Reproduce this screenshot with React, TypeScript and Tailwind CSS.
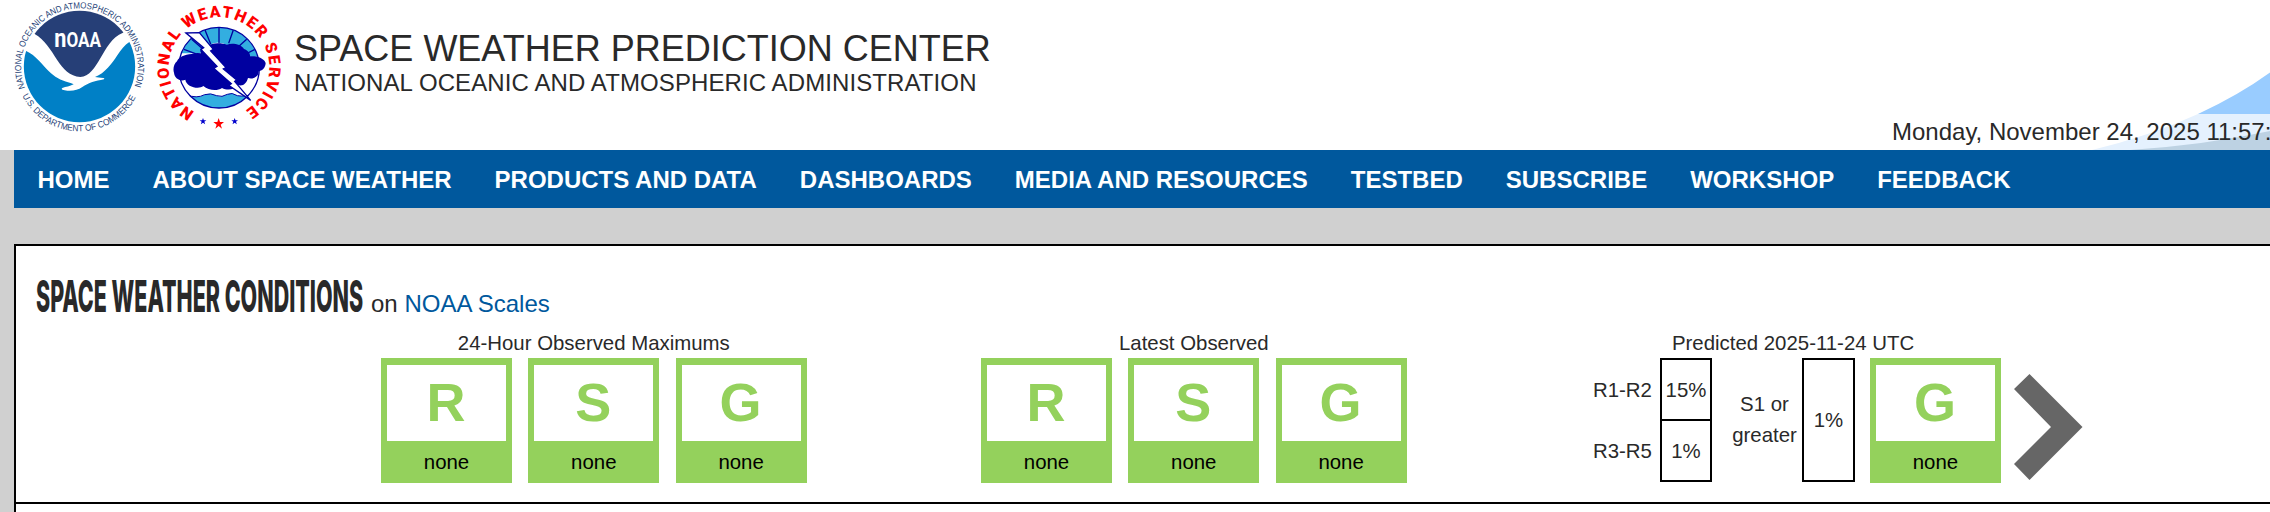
import React from 'react'

const navItems = [
  'HOME',
  'ABOUT SPACE WEATHER',
  'PRODUCTS AND DATA',
  'DASHBOARDS',
  'MEDIA AND RESOURCES',
  'TESTBED',
  'SUBSCRIBE',
  'WORKSHOP',
  'FEEDBACK',
]

function NoaaLogo() {
  return (
    <svg className="block h-[134px] w-[134px]" viewBox="36 0 402 402">
      <defs>
        <path id="noaa-top" d="M75.500 264 A175 175 0 1 1 401.500 264" />
        <path id="noaa-bottom" d="M67 287 A191 191 0 0 0 410 287" />
        <clipPath id="noaa-disc">
          <circle cx="238.500" cy="199.500" r="167" />
        </clipPath>
      </defs>
      <g clipPath="url(#noaa-disc)">
        <path fill="#263f77" d="M60 20H420V60L369 98C335 112 318 146 301 175C285 203 267 231 241 231C209 229 190 208 172 181C151 148 134 119 104 102L60 70Z" />
        <path fill="#0080c6" d="M60 145L77 152C108 165 130 198 153 220C170 235 190 244 214 250L221 253C209 260 198 260 187 264Q181 269 194 271C215 275 232 271 247 261C266 248 286 243 312 238Q316 233 302 233L285 231C315 219 336 190 351 167C363 149 374 135 388 126L430 110V390H50Z" />
      </g>
      <text x="163" y="141" textLength="140" lengthAdjust="spacingAndGlyphs" className="fill-white font-['Roboto'] text-[60px] font-bold">
        <tspan className="text-[76px]">n</tspan>OAA
      </text>
      <text className="fill-[#263f77] font-['Liberation_Sans'] text-[27px]">
        <textPath href="#noaa-top" textLength="674" lengthAdjust="spacingAndGlyphs">
          NATIONAL OCEANIC AND ATMOSPHERIC ADMINISTRATION
        </textPath>
      </text>
      <text className="fill-[#263f77] font-['Liberation_Sans'] text-[27px]">
        <textPath href="#noaa-bottom" textLength="420" lengthAdjust="spacingAndGlyphs">
          U.S. DEPARTMENT OF COMMERCE
        </textPath>
      </text>
    </svg>
  )
}

function NwsLogo() {
  return (
    <svg className="block h-[134px] w-[128px]" viewBox="465 0 384 402">
      <defs>
        <path id="nws-ring" d="M584 335 A151 151 0 1 1 730 335" />
        <clipPath id="nws-disc">
          <circle cx="657" cy="203" r="121" />
        </clipPath>
      </defs>
      <circle cx="657" cy="203" r="121" fill="#fff" />
      <g clipPath="url(#nws-disc)">
        <path fill="#33aee0" d="M530 70H790V170H720Q657 90 600 160H530Z" />
        <path fill="#33aee0" stroke="#0000a0" strokeWidth="3" d="M560 284Q590 297 614 284Q632 278 650 287Q666 293 682 283Q696 276 712 287Q735 291 765 281V330H560Z" />
        <path stroke="#0000a0" strokeWidth="4" d="M657 80V130M615 90L632 132M700 90L686 130M575 118L612 150M740 118L710 145M552 148L600 166M765 148L725 168" />
      </g>
      <circle cx="657" cy="203" r="121" fill="none" stroke="#0000a0" strokeWidth="4" />
      <path
        fill="#0000a0"
        d="M531 184C536 171 553 164 575 162Q591 157 603 160C596 145 608 137 622 138C636 127 665 128 681 134C697 128 724 133 732 147C744 151 751 161 750 169C773 166 795 177 797 190C796 205 785 213 776 214C778 227 763 239 744 234C740 250 729 260 714 255C701 272 680 271 666 264C649 275 625 270 610 258C596 270 558 260 556 239C540 247 523 233 522 218C518 207 522 191 531 184Z"
      />
      <path fill="#fff" stroke="#0000a0" strokeWidth="4" d="M558 99L598 98L640 148L632 153L678 203L670 207L710 240L704 244L752 301L686 256L694 251L641 205L651 199L603 148L611 143Z" />
      <text className="fill-[#f00] font-['Roboto'] text-[48px] font-black">
        <textPath href="#nws-ring" textLength="788" lengthAdjust="spacing">
          NATIONAL WEATHER SERVICE
        </textPath>
      </text>
      <path fill="#f00" d="M656 354L660 366H672L662 374L666 386L656 378L646 386L650 374L640 366H652Z" />
      <path fill="#00c" d="M609 354L611.500 361H619L613 365L615.500 373L609 368L602.500 373L605 365L599 361H606.500Z" />
      <path fill="#00c" d="M704 354L706.500 361H714L708 365L710.500 373L704 368L697.500 373L700 365L694 361H701.500Z" />
    </svg>
  )
}

function ScaleBox({ letter }: { letter: string }) {
  return (
    <div className="flex h-[125px] w-[131px] flex-col bg-[#94d15c] px-1.5 pt-[7px] text-center">
      <div className="h-[76px] bg-white pr-px text-[54px] leading-[74px] font-bold text-[#94d15c]">{letter}</div>
      <div className="text-[20.4px] leading-[42px] text-black">none</div>
    </div>
  )
}

function Observed({ title }: { title: string }) {
  return (
    <div className="w-[425.6px]">
      <h3 className="mb-[3px] text-center text-[20.4px] leading-6">{title}</h3>
      <div className="flex justify-between">
        <ScaleBox letter="R" />
        <ScaleBox letter="S" />
        <ScaleBox letter="G" />
      </div>
    </div>
  )
}

function Predicted() {
  return (
    <div className="w-[410px]">
      <h3 className="mb-[3px] pl-[79px] text-[20.4px] leading-6">Predicted 2025-11-24 UTC</h3>
      <div className="flex text-[20.4px]">
        <div className="w-[67px] pt-[1.5px] leading-[61px]">
          <div>R1-R2</div>
          <div>R3-R5</div>
        </div>
        <div className="h-[124px] w-[52px] border-2 border-black text-center leading-[60px]">
          <div className="h-[61px] border-b-2 border-black">15%</div>
          <div>1%</div>
        </div>
        <div className="flex h-[124px] w-[90px] flex-col justify-center pl-[15px] text-center leading-[31px]">
          <div>S1 or</div>
          <div>greater</div>
        </div>
        <div className="mr-[15px] h-[124px] w-[53px] border-2 border-black text-center leading-[120px]">1%</div>
        <ScaleBox letter="G" />
      </div>
    </div>
  )
}

export default function App() {
  return (
    <div className="flex h-[512px] w-[2270px] flex-col overflow-hidden bg-[#d0d0d0] font-['Liberation_Sans',Arial,sans-serif] text-[#292929]">
      <header className="relative flex h-[150px] bg-white pl-3">
        <NoaaLogo />
        <div className="ml-[9px]">
          <NwsLogo />
        </div>
        <div className="relative ml-[11px] pt-[27px] whitespace-nowrap">
          <h1 className="text-[36px] leading-[43px]">SPACE WEATHER PREDICTION CENTER</h1>
          <h2 className="text-[24px] leading-[25px] tracking-[0.1px]">NATIONAL OCEANIC AND ATMOSPHERIC ADMINISTRATION</h2>
        </div>
        {/* earth limb behind the clock */}
        <svg className="absolute right-0 bottom-0 h-[90px] w-[190px]" viewBox="2080 60 190 90">
          <path fill="#99ccff" d="M2198 114Q2239 95 2270 72.500V114Z" />
          <path fill="#e5f1fe" d="M2092 150Q2150 136 2198 114H2270V150Z" />
          <path fill="#bdd2e3" d="M2130 150Q2205 145 2270 131V150Z" />
        </svg>
        <div className="relative ml-auto w-[378px] overflow-hidden pt-[117px] text-[24px] leading-[29px] whitespace-nowrap">
          Monday, November 24, 2025 11:57:
        </div>
      </header>

      <nav className="ml-3.5 flex h-[58px] shrink-0 gap-[43px] bg-[#00589d] pl-[23.5px] text-[24px] leading-[59px] font-bold whitespace-nowrap text-white">
        {navItems.map((item) => (
          <a key={item}>{item}</a>
        ))}
      </nav>

      <main className="mt-9 ml-3.5 flex-1 border-t-2 border-l-2 border-black bg-white">
        <section className="h-[258px] border-b-2 border-black">
          <div className="flex h-[85px] items-baseline pt-5 pl-5 text-[24px] leading-[60px]">
            <div className="w-[335px]">
              <h2 className="w-max origin-left scale-x-[0.488] font-['Inter'] text-[44px] font-extrabold whitespace-nowrap">
                SPACE WEATHER CONDITIONS
              </h2>
            </div>
            <span className="whitespace-nowrap">
              on <a className="text-[#00589d]">NOAA Scales</a>
            </span>
          </div>
          <div className="flex pl-[365px]">
            <Observed title="24-Hour Observed Maximums" />
            <div className="ml-[174.4px]">
              <Observed title="Latest Observed" />
            </div>
            <div className="ml-[186.4px]">
              <Predicted />
            </div>
            <svg className="mt-[42px] ml-[11px] h-[108px] w-[69px]" viewBox="0 0 69 108">
              <path fill="#666" d="M0 16L15.500 1L68.500 54L15.500 107L0 91L37 54Z" />
            </svg>
          </div>
        </section>
      </main>
    </div>
  )
}
